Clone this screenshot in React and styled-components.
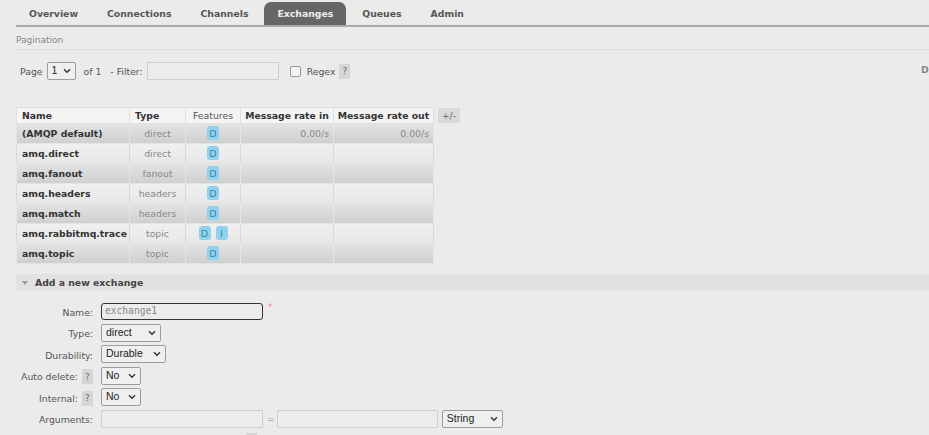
import React from "react";
import styled, { createGlobalStyle } from "styled-components";

const Global = createGlobalStyle`
  html, body { margin: 0; padding: 0; background: #ebebeb; overflow: hidden; }
  body { font-family: "DejaVu Sans", Verdana, sans-serif; font-size: 9.3px; color: #444; }
`;

const Page = styled.div`
  width: 1200px;
  padding: 2px 0 0 16px;
  box-sizing: border-box;
`;

const Nav = styled.nav`
  display: flex;
  gap: 3px;
  border-bottom: 2px solid #aaa;
  height: 23px;
`;

const Tab = styled.div`
  padding: 0 13px;
  height: 23px;
  display: flex;
  align-items: center;
  font-weight: bold;
  font-size: 9.3px;
  color: ${(p) => (p.$active ? "#eee" : "#555")};
  background: ${(p) => (p.$active ? "#666" : "transparent")};
  border-radius: ${(p) => (p.$active ? "7px 7px 0 0" : "0")};
`;

const SectionTitle = styled.div`
  margin-top: 8px;
  color: #888;
  font-size: 9px;
  padding-bottom: 4px;
  border-bottom: 1px solid #dedede;
`;

const FilterRow = styled.div`
  display: flex;
  align-items: center;
  margin-top: 12px;
  height: 18px;
`;

const FilterLeft = styled.div`
  flex: 0 0 905px;
  display: flex;
  align-items: center;
  padding-left: 4px;
  box-sizing: border-box;
`;

const Info = styled.span`
  color: #888;
  white-space: nowrap;
  font-weight: bold;
  margin-top: -4px;
`;

const Txt = styled.span`
  color: ${(p) => p.$c || "#555"};
  margin: ${(p) => p.$m || "0"};
  font-weight: ${(p) => (p.$bold ? "bold" : "normal")};
  white-space: nowrap;
`;

const SelWrap = styled.span`
  position: relative;
  display: inline-flex;
  width: ${(p) => p.$w}px;
  height: 18px;
  margin: ${(p) => p.$m || "0"};
`;

const Sel = styled.select`
  appearance: none;
  width: 100%;
  height: 100%;
  box-sizing: border-box;
  border: 1px solid #9c9c9c;
  border-radius: 2px;
  background: #efefef;
  font-family: "Liberation Sans", Arial, sans-serif;
  font-size: 10.5px;
  color: #222;
  padding: 0 0 2px 4px;
  margin: 0;
`;

const Chevron = styled.svg`
  position: absolute;
  right: 5px;
  top: 6px;
  width: 8px;
  height: 6px;
  pointer-events: none;
`;

const Select = ({ w, m, value }) => (
  <SelWrap $w={w} $m={m}>
    <Sel defaultValue={value}>
      <option>{value}</option>
    </Sel>
    <Chevron viewBox="0 0 8 6">
      <path d="M1 1.2 L4 4.2 L7 1.2" fill="none" stroke="#333" strokeWidth="1.4" />
    </Chevron>
  </SelWrap>
);

const Input = styled.input`
  box-sizing: border-box;
  width: ${(p) => p.$w}px;
  height: ${(p) => (p.$focus ? 17 : 18)}px;
  margin: ${(p) => p.$m || "0"};
  border: ${(p) => (p.$focus ? "1.5px solid #333" : "1px solid #cdcdcd")};
  border-radius: ${(p) => (p.$focus ? "3px" : "1px")};
  background: #ececec;
  font-family: "DejaVu Sans Mono", "Liberation Mono", monospace;
  font-size: 9.6px;
  color: #888;
  padding: 0 0 1px 3px;
  outline: none;
`;

const Check = styled.span`
  display: inline-block;
  width: 9px;
  height: 9px;
  border: 1px solid #999;
  border-radius: 2px;
  background: #f4f4f4;
  margin: 0 6px 0 11px;
`;

const Help = styled.span`
  display: inline-flex;
  align-items: center;
  justify-content: center;
  width: 11px;
  height: 15px;
  background: #d6d6d6;
  color: #666;
  font-size: 9px;
  margin: ${(p) => p.$m || "0"};
`;

const TableRow = styled.div`
  display: flex;
  align-items: flex-start;
  margin-top: 27px;
`;

const Table = styled.table`
  border-collapse: collapse;
  table-layout: fixed;
  width: 418px;
  border: 1px solid #dedede;
`;

const Th = styled.th`
  height: 15px;
  padding: 0 0 0 ${(p) => (p.$align === "left" ? "5px" : "0")};
  text-align: ${(p) => p.$align || "center"};
  font-weight: ${(p) => (p.$normal ? "normal" : "bold")};
  color: ${(p) => (p.$normal ? "#555" : "#333")};
  background: #f4f4f4;
  border: 1px solid #e0e0e0;
  white-space: nowrap;
`;

const Tr = styled.tr`
  background: ${(p) =>
    p.$odd
      ? "linear-gradient(#e3e3e3, #cecece)"
      : "linear-gradient(#f0f0f0, #e7e7e7)"};
`;

const Td = styled.td`
  height: 18px;
  padding: 0 ${(p) => (p.$align === "right" ? "4px" : "0")} 1px ${(p) =>
      p.$align === "left" ? "5px" : "0"};
  text-align: ${(p) => p.$align || "center"};
  font-weight: ${(p) => (p.$bold ? "bold" : "normal")};
  color: ${(p) => (p.$bold ? "#333" : "#888")};
  border-left: 1px solid ${(p) => (p.$odd ? "#e4e4e4" : "#d8d8d8")};
  border-right: 1px solid ${(p) => (p.$odd ? "#e4e4e4" : "#d8d8d8")};
  border-bottom: 1px solid #e4e4e4;
  white-space: nowrap;
  vertical-align: middle;
`;

const Badges = styled.span`
  display: inline-flex;
  gap: 5px;
  vertical-align: middle;
`;

const Badge = styled.span`
  display: inline-flex;
  align-items: center;
  justify-content: center;
  width: 12px;
  height: 14px;
  border-radius: 3px;
  background: #8fd2ee;
  color: #3d86a8;
  font-size: 9.5px;
`;

const PlusMinus = styled.span`
  margin-left: 4px;
  margin-top: 1px;
  width: 22px;
  height: 15px;
  display: flex;
  align-items: center;
  justify-content: center;
  background: #dadada;
  color: #666;
  font-size: 9px;
`;

const SectionBar = styled.div`
  margin-top: 10px;
  height: 17px;
  display: flex;
  align-items: center;
  background: #e2e2e2;
  padding-left: 6px;
  font-weight: bold;
  color: #444;
`;

const Tri = styled.span`
  width: 0;
  height: 0;
  border-left: 3.5px solid transparent;
  border-right: 3.5px solid transparent;
  border-top: 4px solid #999;
  margin-right: 7px;
`;

const Form = styled.div`
  display: grid;
  grid-template-columns: 77px auto;
  column-gap: 8px;
  row-gap: 3.5px;
  margin-top: 11px;
  align-items: center;
`;

const Label = styled.div`
  display: flex;
  align-items: center;
  justify-content: flex-end;
  height: 18px;
  color: #555;
  white-space: nowrap;
  padding-top: 2px;
  box-sizing: border-box;
`;

const Ctrl = styled.div`
  display: flex;
  align-items: center;
  height: 18px;
`;

const Star = styled.span`
  color: #e58a8a;
  margin: -8px 0 0 5px;
  font-size: 9px;
`;

const rows = [
  { name: "(AMQP default)", type: "direct", f: ["D"], rin: "0.00/s", rout: "0.00/s" },
  { name: "amq.direct", type: "direct", f: ["D"] },
  { name: "amq.fanout", type: "fanout", f: ["D"] },
  { name: "amq.headers", type: "headers", f: ["D"] },
  { name: "amq.match", type: "headers", f: ["D"] },
  { name: "amq.rabbitmq.trace", type: "topic", f: ["D", "I"] },
  { name: "amq.topic", type: "topic", f: ["D"] },
];

export default function App() {
  return (
    <>
      <Global />
      <Page>
        <Nav>
          {["Overview", "Connections", "Channels", "Exchanges", "Queues", "Admin"].map((t) => (
            <Tab key={t} $active={t === "Exchanges"}>
              {t}
            </Tab>
          ))}
        </Nav>
        <SectionTitle>Pagination</SectionTitle>
        <FilterRow>
          <FilterLeft>
            <Txt>Page</Txt>
            <Select w={29} m="0 0 0 4px" value="1" />
            <Txt $m="0 0 0 8px">of 1</Txt>
            <Txt $m="0 0 0 9px">- Filter:</Txt>
            <Input $w={132} $m="0 0 0 4px" />
            <Check />
            <Txt>Regex</Txt>
            <Help $m="0 0 0 4px">?</Help>
          </FilterLeft>
          <Info>Displaying 7 items , page size up to:</Info>
        </FilterRow>
        <TableRow>
          <Table>
            <colgroup>
              <col style={{ width: 113 }} />
              <col style={{ width: 56 }} />
              <col style={{ width: 55 }} />
              <col style={{ width: 93 }} />
              <col style={{ width: 100 }} />
            </colgroup>
            <thead>
              <tr>
                <Th $align="left">Name</Th>
                <Th $align="left">Type</Th>
                <Th $normal>Features</Th>
                <Th>Message rate in</Th>
                <Th>Message rate out</Th>
              </tr>
            </thead>
            <tbody>
              {rows.map((r, i) => {
                const odd = i % 2 === 0;
                return (
                  <Tr key={r.name} $odd={odd}>
                    <Td $align="left" $bold $odd={odd}>
                      {r.name}
                    </Td>
                    <Td $odd={odd}>{r.type}</Td>
                    <Td $odd={odd}>
                      <Badges>
                        {r.f.map((b) => (
                          <Badge key={b}>{b}</Badge>
                        ))}
                      </Badges>
                    </Td>
                    <Td $align="right" $odd={odd}>
                      {r.rin || ""}
                    </Td>
                    <Td $align="right" $odd={odd}>
                      {r.rout || ""}
                    </Td>
                  </Tr>
                );
              })}
            </tbody>
          </Table>
          <PlusMinus>+/-</PlusMinus>
        </TableRow>
        <SectionBar>
          <Tri />
          Add a new exchange
        </SectionBar>
        <Form>
          <Label>Name:</Label>
          <Ctrl>
            <Input $w={162} $focus defaultValue="exchange1" />
            <Star>*</Star>
          </Ctrl>
          <Label>Type:</Label>
          <Ctrl>
            <Select w={60} value="direct" />
          </Ctrl>
          <Label>Durability:</Label>
          <Ctrl>
            <Select w={65} value="Durable" />
          </Ctrl>
          <Label>
            Auto delete:<Help $m="0 0 0 4px">?</Help>
          </Label>
          <Ctrl>
            <Select w={40} value="No" />
          </Ctrl>
          <Label>
            Internal:<Help $m="0 0 0 4px">?</Help>
          </Label>
          <Ctrl>
            <Select w={40} value="No" />
          </Ctrl>
          <Label>Arguments:</Label>
          <Ctrl>
            <Input $w={162} />
            <Txt $c="#aaa" $m="0 2px 0 4px">=</Txt>
            <Input $w={161} />
            <Select w={61} m="0 0 0 4px" value="String" />
          </Ctrl>
          <span />
          <Ctrl>
            <Txt $c="#aaa" $m="0 0 0 4px">Add</Txt>
            <Txt $c="#333" $bold $m="0 0 0 12px">Alternate exchange</Txt>
            <Help $m="0 0 0 8px">?</Help>
          </Ctrl>
        </Form>
      </Page>
    </>
  );
}
